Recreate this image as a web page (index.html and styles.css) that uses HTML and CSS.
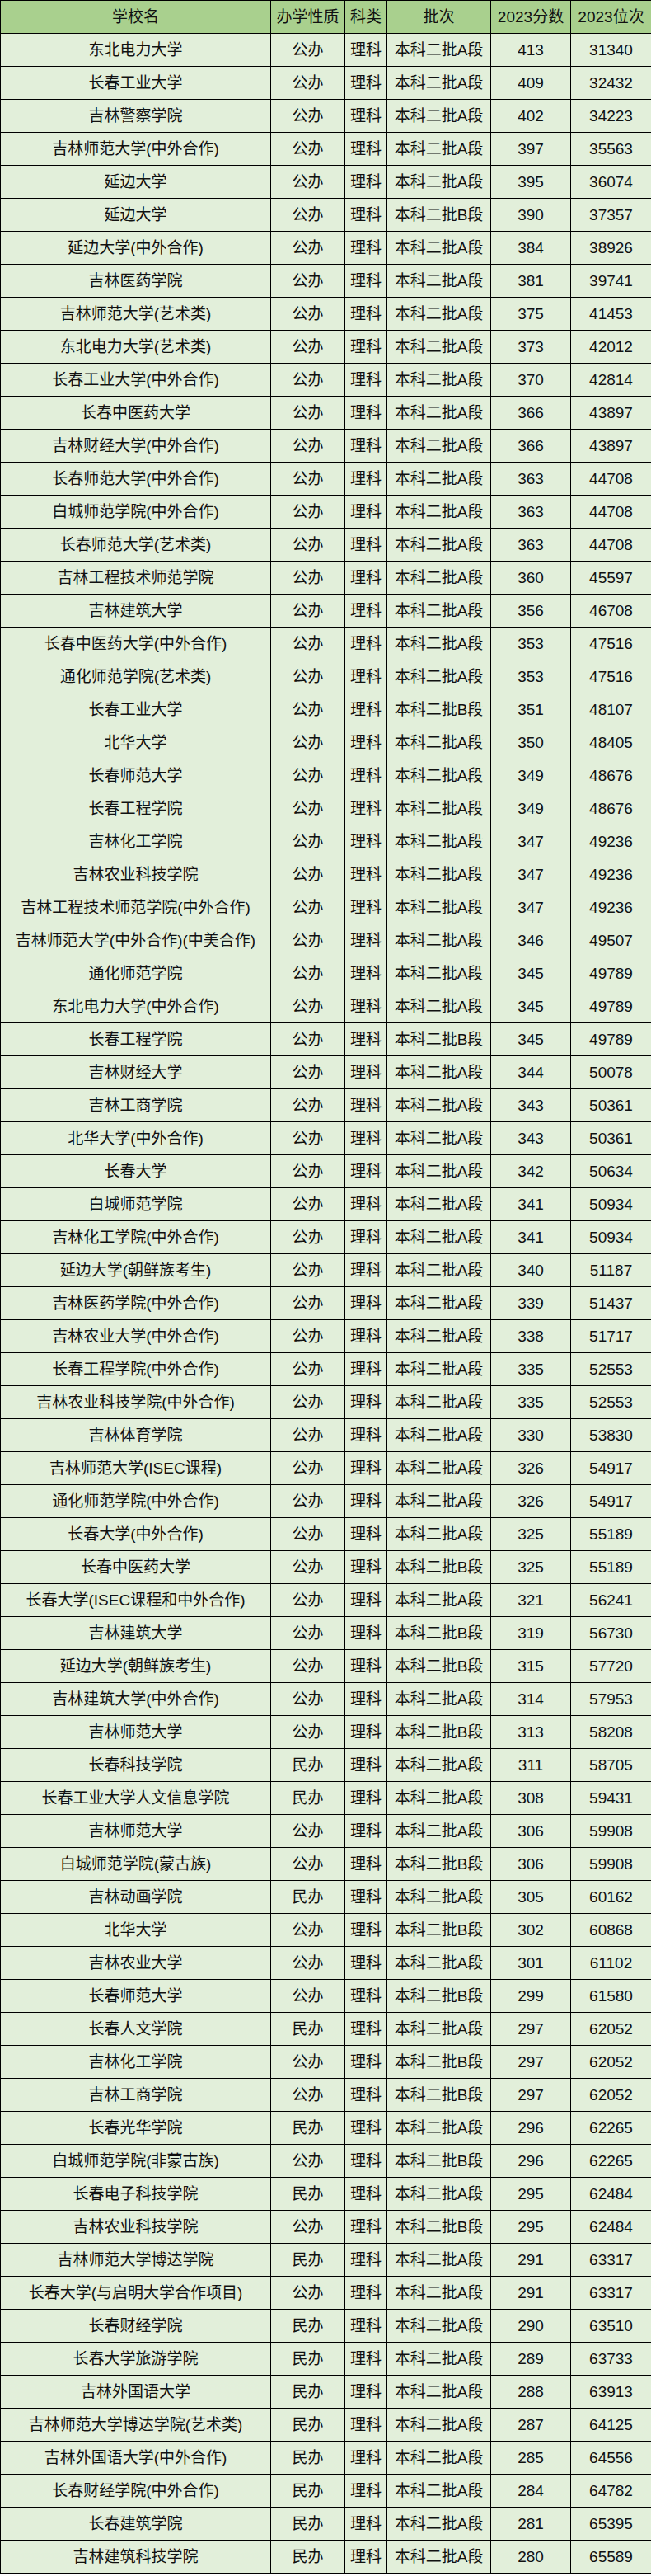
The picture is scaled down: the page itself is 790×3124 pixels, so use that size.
FILE: index.html
```html
<!DOCTYPE html>
<html lang="zh-CN">
<head>
<meta charset="utf-8">
<title>吉林 2023 本科二批 理科 分数线</title>
<link rel="stylesheet" href="styles.css">
</head>
<body>
<table class="score-table">
<colgroup>
<col class="c-name"><col class="c-type"><col class="c-sub"><col class="c-batch"><col class="c-score"><col class="c-rank">
</colgroup>
<thead>
<tr><th>学校名</th><th>办学性质</th><th>科类</th><th>批次</th><th>2023分数</th><th>2023位次</th></tr>
</thead>
<tbody>
<tr><td>东北电力大学</td><td>公办</td><td>理科</td><td>本科二批A段</td><td>413</td><td>31340</td></tr>
<tr><td>长春工业大学</td><td>公办</td><td>理科</td><td>本科二批A段</td><td>409</td><td>32432</td></tr>
<tr><td>吉林警察学院</td><td>公办</td><td>理科</td><td>本科二批A段</td><td>402</td><td>34223</td></tr>
<tr><td>吉林师范大学(中外合作)</td><td>公办</td><td>理科</td><td>本科二批A段</td><td>397</td><td>35563</td></tr>
<tr><td>延边大学</td><td>公办</td><td>理科</td><td>本科二批A段</td><td>395</td><td>36074</td></tr>
<tr><td>延边大学</td><td>公办</td><td>理科</td><td>本科二批B段</td><td>390</td><td>37357</td></tr>
<tr><td>延边大学(中外合作)</td><td>公办</td><td>理科</td><td>本科二批A段</td><td>384</td><td>38926</td></tr>
<tr><td>吉林医药学院</td><td>公办</td><td>理科</td><td>本科二批A段</td><td>381</td><td>39741</td></tr>
<tr><td>吉林师范大学(艺术类)</td><td>公办</td><td>理科</td><td>本科二批A段</td><td>375</td><td>41453</td></tr>
<tr><td>东北电力大学(艺术类)</td><td>公办</td><td>理科</td><td>本科二批A段</td><td>373</td><td>42012</td></tr>
<tr><td>长春工业大学(中外合作)</td><td>公办</td><td>理科</td><td>本科二批A段</td><td>370</td><td>42814</td></tr>
<tr><td>长春中医药大学</td><td>公办</td><td>理科</td><td>本科二批A段</td><td>366</td><td>43897</td></tr>
<tr><td>吉林财经大学(中外合作)</td><td>公办</td><td>理科</td><td>本科二批A段</td><td>366</td><td>43897</td></tr>
<tr><td>长春师范大学(中外合作)</td><td>公办</td><td>理科</td><td>本科二批A段</td><td>363</td><td>44708</td></tr>
<tr><td>白城师范学院(中外合作)</td><td>公办</td><td>理科</td><td>本科二批A段</td><td>363</td><td>44708</td></tr>
<tr><td>长春师范大学(艺术类)</td><td>公办</td><td>理科</td><td>本科二批A段</td><td>363</td><td>44708</td></tr>
<tr><td>吉林工程技术师范学院</td><td>公办</td><td>理科</td><td>本科二批A段</td><td>360</td><td>45597</td></tr>
<tr><td>吉林建筑大学</td><td>公办</td><td>理科</td><td>本科二批A段</td><td>356</td><td>46708</td></tr>
<tr><td>长春中医药大学(中外合作)</td><td>公办</td><td>理科</td><td>本科二批A段</td><td>353</td><td>47516</td></tr>
<tr><td>通化师范学院(艺术类)</td><td>公办</td><td>理科</td><td>本科二批A段</td><td>353</td><td>47516</td></tr>
<tr><td>长春工业大学</td><td>公办</td><td>理科</td><td>本科二批B段</td><td>351</td><td>48107</td></tr>
<tr><td>北华大学</td><td>公办</td><td>理科</td><td>本科二批A段</td><td>350</td><td>48405</td></tr>
<tr><td>长春师范大学</td><td>公办</td><td>理科</td><td>本科二批A段</td><td>349</td><td>48676</td></tr>
<tr><td>长春工程学院</td><td>公办</td><td>理科</td><td>本科二批A段</td><td>349</td><td>48676</td></tr>
<tr><td>吉林化工学院</td><td>公办</td><td>理科</td><td>本科二批A段</td><td>347</td><td>49236</td></tr>
<tr><td>吉林农业科技学院</td><td>公办</td><td>理科</td><td>本科二批A段</td><td>347</td><td>49236</td></tr>
<tr><td>吉林工程技术师范学院(中外合作)</td><td>公办</td><td>理科</td><td>本科二批A段</td><td>347</td><td>49236</td></tr>
<tr><td>吉林师范大学(中外合作)(中美合作)</td><td>公办</td><td>理科</td><td>本科二批A段</td><td>346</td><td>49507</td></tr>
<tr><td>通化师范学院</td><td>公办</td><td>理科</td><td>本科二批A段</td><td>345</td><td>49789</td></tr>
<tr><td>东北电力大学(中外合作)</td><td>公办</td><td>理科</td><td>本科二批A段</td><td>345</td><td>49789</td></tr>
<tr><td>长春工程学院</td><td>公办</td><td>理科</td><td>本科二批B段</td><td>345</td><td>49789</td></tr>
<tr><td>吉林财经大学</td><td>公办</td><td>理科</td><td>本科二批A段</td><td>344</td><td>50078</td></tr>
<tr><td>吉林工商学院</td><td>公办</td><td>理科</td><td>本科二批A段</td><td>343</td><td>50361</td></tr>
<tr><td>北华大学(中外合作)</td><td>公办</td><td>理科</td><td>本科二批A段</td><td>343</td><td>50361</td></tr>
<tr><td>长春大学</td><td>公办</td><td>理科</td><td>本科二批A段</td><td>342</td><td>50634</td></tr>
<tr><td>白城师范学院</td><td>公办</td><td>理科</td><td>本科二批A段</td><td>341</td><td>50934</td></tr>
<tr><td>吉林化工学院(中外合作)</td><td>公办</td><td>理科</td><td>本科二批A段</td><td>341</td><td>50934</td></tr>
<tr><td>延边大学(朝鲜族考生)</td><td>公办</td><td>理科</td><td>本科二批A段</td><td>340</td><td>51187</td></tr>
<tr><td>吉林医药学院(中外合作)</td><td>公办</td><td>理科</td><td>本科二批A段</td><td>339</td><td>51437</td></tr>
<tr><td>吉林农业大学(中外合作)</td><td>公办</td><td>理科</td><td>本科二批A段</td><td>338</td><td>51717</td></tr>
<tr><td>长春工程学院(中外合作)</td><td>公办</td><td>理科</td><td>本科二批A段</td><td>335</td><td>52553</td></tr>
<tr><td>吉林农业科技学院(中外合作)</td><td>公办</td><td>理科</td><td>本科二批A段</td><td>335</td><td>52553</td></tr>
<tr><td>吉林体育学院</td><td>公办</td><td>理科</td><td>本科二批A段</td><td>330</td><td>53830</td></tr>
<tr><td>吉林师范大学(ISEC课程)</td><td>公办</td><td>理科</td><td>本科二批A段</td><td>326</td><td>54917</td></tr>
<tr><td>通化师范学院(中外合作)</td><td>公办</td><td>理科</td><td>本科二批A段</td><td>326</td><td>54917</td></tr>
<tr><td>长春大学(中外合作)</td><td>公办</td><td>理科</td><td>本科二批A段</td><td>325</td><td>55189</td></tr>
<tr><td>长春中医药大学</td><td>公办</td><td>理科</td><td>本科二批B段</td><td>325</td><td>55189</td></tr>
<tr><td>长春大学(ISEC课程和中外合作)</td><td>公办</td><td>理科</td><td>本科二批A段</td><td>321</td><td>56241</td></tr>
<tr><td>吉林建筑大学</td><td>公办</td><td>理科</td><td>本科二批B段</td><td>319</td><td>56730</td></tr>
<tr><td>延边大学(朝鲜族考生)</td><td>公办</td><td>理科</td><td>本科二批B段</td><td>315</td><td>57720</td></tr>
<tr><td>吉林建筑大学(中外合作)</td><td>公办</td><td>理科</td><td>本科二批A段</td><td>314</td><td>57953</td></tr>
<tr><td>吉林师范大学</td><td>公办</td><td>理科</td><td>本科二批B段</td><td>313</td><td>58208</td></tr>
<tr><td>长春科技学院</td><td>民办</td><td>理科</td><td>本科二批A段</td><td>311</td><td>58705</td></tr>
<tr><td>长春工业大学人文信息学院</td><td>民办</td><td>理科</td><td>本科二批A段</td><td>308</td><td>59431</td></tr>
<tr><td>吉林师范大学</td><td>公办</td><td>理科</td><td>本科二批A段</td><td>306</td><td>59908</td></tr>
<tr><td>白城师范学院(蒙古族)</td><td>公办</td><td>理科</td><td>本科二批B段</td><td>306</td><td>59908</td></tr>
<tr><td>吉林动画学院</td><td>民办</td><td>理科</td><td>本科二批A段</td><td>305</td><td>60162</td></tr>
<tr><td>北华大学</td><td>公办</td><td>理科</td><td>本科二批B段</td><td>302</td><td>60868</td></tr>
<tr><td>吉林农业大学</td><td>公办</td><td>理科</td><td>本科二批A段</td><td>301</td><td>61102</td></tr>
<tr><td>长春师范大学</td><td>公办</td><td>理科</td><td>本科二批B段</td><td>299</td><td>61580</td></tr>
<tr><td>长春人文学院</td><td>民办</td><td>理科</td><td>本科二批A段</td><td>297</td><td>62052</td></tr>
<tr><td>吉林化工学院</td><td>公办</td><td>理科</td><td>本科二批B段</td><td>297</td><td>62052</td></tr>
<tr><td>吉林工商学院</td><td>公办</td><td>理科</td><td>本科二批B段</td><td>297</td><td>62052</td></tr>
<tr><td>长春光华学院</td><td>民办</td><td>理科</td><td>本科二批A段</td><td>296</td><td>62265</td></tr>
<tr><td>白城师范学院(非蒙古族)</td><td>公办</td><td>理科</td><td>本科二批B段</td><td>296</td><td>62265</td></tr>
<tr><td>长春电子科技学院</td><td>民办</td><td>理科</td><td>本科二批A段</td><td>295</td><td>62484</td></tr>
<tr><td>吉林农业科技学院</td><td>公办</td><td>理科</td><td>本科二批B段</td><td>295</td><td>62484</td></tr>
<tr><td>吉林师范大学博达学院</td><td>民办</td><td>理科</td><td>本科二批A段</td><td>291</td><td>63317</td></tr>
<tr><td>长春大学(与启明大学合作项目)</td><td>公办</td><td>理科</td><td>本科二批A段</td><td>291</td><td>63317</td></tr>
<tr><td>长春财经学院</td><td>民办</td><td>理科</td><td>本科二批A段</td><td>290</td><td>63510</td></tr>
<tr><td>长春大学旅游学院</td><td>民办</td><td>理科</td><td>本科二批A段</td><td>289</td><td>63733</td></tr>
<tr><td>吉林外国语大学</td><td>民办</td><td>理科</td><td>本科二批A段</td><td>288</td><td>63913</td></tr>
<tr><td>吉林师范大学博达学院(艺术类)</td><td>民办</td><td>理科</td><td>本科二批A段</td><td>287</td><td>64125</td></tr>
<tr><td>吉林外国语大学(中外合作)</td><td>民办</td><td>理科</td><td>本科二批A段</td><td>285</td><td>64556</td></tr>
<tr><td>长春财经学院(中外合作)</td><td>民办</td><td>理科</td><td>本科二批A段</td><td>284</td><td>64782</td></tr>
<tr><td>长春建筑学院</td><td>民办</td><td>理科</td><td>本科二批A段</td><td>281</td><td>65395</td></tr>
<tr><td>吉林建筑科技学院</td><td>民办</td><td>理科</td><td>本科二批A段</td><td>280</td><td>65589</td></tr>
</tbody>
</table>
</body>
</html>
```

FILE: styles.css
```css
html, body {
  margin: 0;
  padding: 0;
  background: #ffffff;
}

.score-table {
  width: 790px;
  border-collapse: collapse;
  table-layout: fixed;
  font-family: "Liberation Sans", "Noto Sans CJK SC", sans-serif;
  font-size: 19px;
  color: #111111;
}

.c-name { width: 328px; }
.c-type { width: 90px; }
.c-sub { width: 51px; }
.c-batch { width: 126px; }
.c-score { width: 97px; }
.c-rank { width: 98px; }

.score-table th,
.score-table td {
  border: 1px solid #000000;
  height: 39px;
  padding: 0;
  text-align: center;
  vertical-align: middle;
  white-space: nowrap;
  font-weight: normal;
  line-height: 20px;
}

.score-table th {
  background: #a9d08e;
}

.score-table td {
  background: #e2efda;
}
```
